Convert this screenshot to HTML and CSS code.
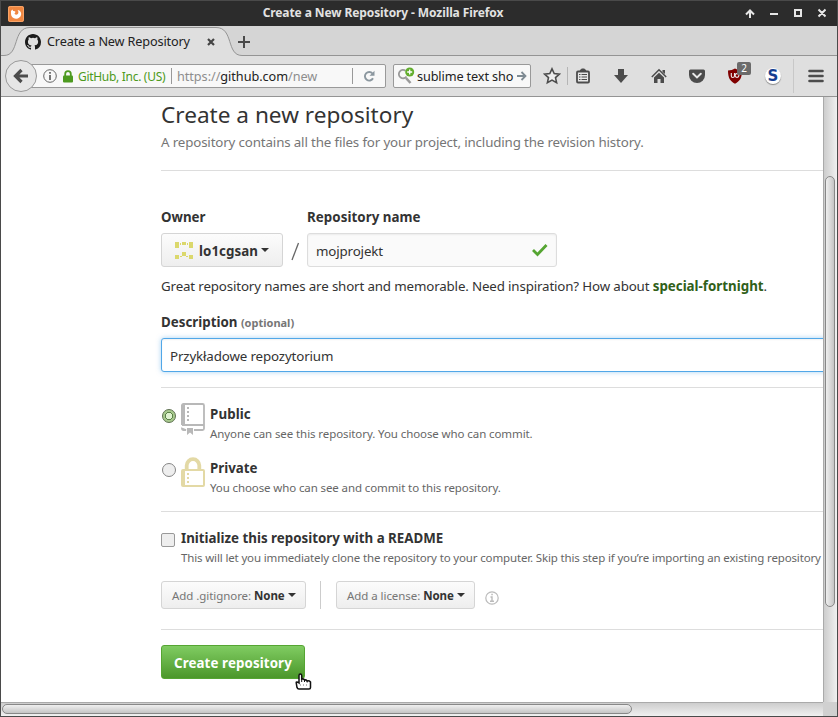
FILE: index.html
```html
<!DOCTYPE html>
<html lang="en">
<head>
<meta charset="utf-8">
<title>Create a New Repository</title>
<link rel="stylesheet" href="styles.css">
</head>
<body>
<div class="window">
  <header class="titlebar">
    <svg class="app-icon" width="16" height="16" viewBox="0 0 16 16"><rect width="16" height="16" rx="2" fill="#f08741"/><rect x=".5" y=".5" width="15" height="15" rx="2" fill="none" stroke="#f7a469"/><path d="M3 5l1.400-1.500.8 1.500c1 0 2 .3 2.300 1L6.500 7.500c.3 1.500 2.500 1.500 3.500.2.700-1 .5-2.400-.4-3.700 2.700.4 4 2.500 3.500 4.800-.5 2.500-2.700 4-5.100 3.900C5 12.500 3 10.500 3 8z" fill="#fff"/></svg>
    <div class="window-title">Create a New Repository - Mozilla Firefox</div>
    <svg class="window-controls" width="84" height="16" viewBox="0 0 84 16" fill="none" stroke="#e6e6e6" stroke-width="2"><path d="M8 12V5M4 8.500l4-4 4 4M28 8h8M53 4h6v6h-6zM76.500 3.500l7 7m0-7l-7 7"/></svg>
  </header>

  <div class="tabstrip">
    <svg class="tab-shape" width="838" height="31" viewBox="0 0 838 31"><path d="M0 29.500h4C20 29.500 12 1.500 30 1.500h186c18 0 10 28 26 28h596V31H0z" fill="#dfdfdf"/><path d="M0 29.500h4C20 29.500 12 1.500 30 1.500h186c18 0 10 28 26 28h596" fill="none" stroke="#949494"/></svg>
    <div class="tab">
      <svg width="16" height="16" viewBox="0 0 16 16"><path fill="#1b1b1b" fill-rule="evenodd" d="M8 0C3.580 0 0 3.580 0 8c0 3.540 2.290 6.530 5.470 7.590.4.070.55-.17.55-.38 0-.19-.01-.82-.01-1.490-2.010.37-2.530-.49-2.690-.94-.09-.23-.48-.94-.82-1.130-.28-.15-.68-.52-.01-.53.63-.01 1.080.58 1.230.82.72 1.210 1.870.87 2.330.66.07-.52.28-.87.51-1.070-1.780-.2-3.640-.89-3.640-3.950 0-.87.31-1.590.82-2.150-.08-.2-.36-1.020.08-2.120 0 0 .67-.21 2.200.82a7.600 7.600 0 014 0c1.530-1.040 2.200-.82 2.200-.82.44 1.100.16 1.920.08 2.120.51.56.82 1.270.82 2.150 0 3.070-1.870 3.750-3.650 3.950.29.25.54.73.54 1.480 0 1.070-.01 1.930-.01 2.200 0 .21.15.46.55.38A8.010 8.010 0 0016 8c0-4.420-3.580-8-8-8z"/></svg>
      <span class="tab-label">Create a New Repository</span>
      <svg class="tab-close" width="8" height="8" viewBox="0 0 8 8"><path d="M1 1l6 6m0-6L1 7" stroke="#444" stroke-width="2.200"/></svg>
      <svg width="12" height="12" viewBox="0 0 12 12"><path d="M6 0v12M0 6h12" stroke="#4a4a4a" stroke-width="2"/></svg>
    </div>
  </div>

  <nav class="toolbar">
    <div class="back"><svg width="16" height="16" viewBox="0 0 16 16"><path d="M8.500 2L2.500 8l6 6M3 8h12" fill="none" stroke="#4c4c4c" stroke-width="3.200"/></svg></div>
    <div class="urlbar">
      <svg class="info" width="14" height="14" viewBox="0 0 14 14"><circle cx="7" cy="7" r="6.300" fill="none" stroke="#666"/><path d="M7 6v5M7 3v1.700" stroke="#555" stroke-width="1.600"/></svg>
      <svg class="lock" width="10" height="13" viewBox="0 0 10 13"><path d="M2.200 6V4a2.800 2.800 0 015.600 0v2" fill="none" stroke="#4d9a20" stroke-width="1.800"/><rect y="5.500" width="10" height="7" rx="1" fill="#4d9a20"/></svg>
      <span class="identity">GitHub, Inc. (US)</span>
      <span class="divider"></span>
      <span class="url">https://<b>github.com</b>/new</span>
      <span class="reload"><svg width="12" height="12" viewBox="0 0 12 12"><path d="M9.500 3.500A4.300 4.300 0 1010 8.300" fill="none" stroke="#8b979f" stroke-width="1.900"/><path d="M11.500.8v5h-5z" fill="#8b979f"/></svg></span>
    </div>
    <div class="search">
      <svg width="18" height="18" viewBox="0 0 18 18"><path d="M8.500 3.700A4.200 4.200 0 109.500 9.500" fill="none" stroke="#9a9a9a" stroke-width="1.800"/><path d="M9 11l4.500 5" stroke="#9a9a9a" stroke-width="2.600"/><circle cx="12.700" cy="5" r="4.500" fill="#62ad2d"/><path d="M12.700 2.500v5M10.200 5h5" stroke="#fff" stroke-width="1.300"/></svg>
      <span class="query">sublime text sho</span>
      <svg width="10" height="10" viewBox="0 0 10 10"><path d="M0 5h8M4.500 1l4 4-4 4" fill="none" stroke="#7f8b93" stroke-width="1.800"/></svg>
    </div>
    <div class="tools">
      <span class="tool star"><svg width="18" height="18" viewBox="0 0 18 18"><path d="M9 1.800l2.200 4.700 5.200.6-3.900 3.500 1.100 5.100L9 13.100l-4.600 2.600 1.100-5.100L1.600 7.100l5.200-.6z" fill="#eee" stroke="#4c4c4c" stroke-width="1.600"/></svg></span>
      <span class="tool ruled"><svg width="16" height="16" viewBox="0 0 16 16" fill="none" stroke="#4c4c4c"><rect x="2" y="3.500" width="12" height="11" rx="1" stroke-width="1.800" fill="#e8e8e8"/><path d="M5 3L6.500 1h3L11 3z" fill="#4c4c4c"/><path d="M4 6.500h1.500M6.500 6.500H12M4 9h1.500M6.500 9H12M4 11.500h1.500M6.500 11.500H12" stroke-width="1.200"/></svg></span>
      <span class="tool"><svg width="16" height="16" viewBox="0 0 16 16"><path d="M5 1h6v6h4l-7 8-7-8h4z" fill="#4c4c4c"/></svg></span>
      <span class="tool"><svg width="16" height="16" viewBox="0 0 16 16"><path d="M.8 9L8 1.800 15.200 9" fill="none" stroke="#4c4c4c" stroke-width="1.500"/><path d="M11.500 2H14v4l-2.500-2zM3 9.500l5-4.700 5 4.700V15H9.500v-4h-3v4H3z" fill="#4c4c4c"/></svg></span>
      <span class="tool"><svg width="16" height="16" viewBox="0 0 16 16"><path d="M1.500 1.500h13q1.500 0 1.500 1.500v4a8 8 0 01-16 0V3q0-1.500 1.500-1.500z" fill="#4c4c4c"/><path d="M4.200 5.800L8 9.400l3.800-3.600" fill="none" stroke="#e8e8e8" stroke-width="2" stroke-linecap="round"/></svg></span>
      <span class="tool"><svg width="16" height="16" viewBox="0 0 16 16"><path d="M8 .5q3 2 7 2C15 10 13 13 8 15.800 3 13 1 10 1 2.500q4 0 7-2z" fill="#800000"/><path d="M4.300 5v3q0 1.500 1.500 1.500T7.500 8V5" fill="none" stroke="#eee" stroke-width="1.100"/><circle cx="10" cy="7.500" r="1.900" fill="none" stroke="#eee" stroke-width="1.100"/></svg><span class="badge">2</span></span>
      <span class="tool"><span class="s-icon">S</span></span>
      <span class="menu"><svg width="16" height="14" viewBox="0 0 16 14"><path d="M1.500 2h13M1.500 7h13M1.500 12h13" stroke="#4c4c4c" stroke-width="2.600" stroke-linecap="round"/></svg></span>
    </div>
  </nav>

  <div class="viewport">
    <main class="page">
      <h1>Create a new repository</h1>
      <p class="lede">A repository contains all the files for your project, including the revision history.</p>
      <hr>
      <div class="fields">
        <div class="field owner">
          <span class="label">Owner</span>
          <div class="button owner-button">
            <svg width="18" height="18" viewBox="0 0 18 18" fill="#dbd86c"><path d="M0 1h4v6H0zM14 1h4v6h-4zM7 1h4v3H7zM5 2h1v2H5zM12 2h1v2h-1zM7 11h4v4H7zM0 14h4v4H0zM14 14h4v4h-4zM5 15h2v1H5zM11 15h2v1h-2z"/></svg>
            <b>lo1cgsan</b><i class="caret"></i>
          </div>
        </div>
        <svg class="slash" width="24" height="34" viewBox="0 0 24 34"><path d="M15.500 10L9 27" stroke="#666" stroke-width="1.300"/></svg>
        <div class="field">
          <span class="label repo-label">Repository name</span>
          <div class="input name-input"><span>mojprojekt</span><svg width="16" height="14" viewBox="0 0 16 14"><path d="M1 7l4.500 4.500L14.500 2" fill="none" stroke="#55a532" stroke-width="2.800"/></svg></div>
        </div>
      </div>
      <p class="hint">Great repository names are short and memorable. Need inspiration? How about <b>special-fortnight</b>.</p>
      <div class="label desc-label"><span class="desc-word">Description</span> <small>(optional)</small></div>
      <div class="input desc-input">Przykładowe repozytorium</div>
      <hr class="after-desc">
      <div class="choice">
        <span class="radio checked"></span>
        <svg width="24" height="34" viewBox="0 0 24 34"><path d="M1 2.500Q1 1 2.500 1h19Q23 1 23 2.500v23q0 1.500-1.500 1.500H13M5 27H2.500Q1 27 1 25.500zM1 22h22" fill="none" stroke="#b8b8b8" stroke-width="1.800"/><path d="M0 2h4v20H0zM6 25h6v7l-3-2.500L6 32zM6 4h2v2H6zM6 8h2v2H6zM6 12h2v2H6zM6 16h2v2H6z" fill="#b8b8b8"/></svg>
        <div class="choice-text"><b class="public-name">Public</b><p class="public-note">Anyone can see this repository. You choose who can commit.</p></div>
      </div>
      <div class="choice">
        <span class="radio"></span>
        <svg width="24" height="34" viewBox="0 0 24 34"><path d="M5.700 13V8.500a6.300 6.300 0 0112.600 0V13" fill="none" stroke="#e3d9a5" stroke-width="3.800"/><rect x="1" y="13" width="22" height="16" rx="1" fill="none" stroke="#e3d9a5" stroke-width="2"/><path d="M1 13h3v16H1zM6 16h2v2H6zM6 20h2v2H6zM6 24h2v2H6z" fill="#e3d9a5"/></svg>
        <div class="choice-text"><b class="private-name">Private</b><p class="private-note">You choose who can see and commit to this repository.</p></div>
      </div>
      <hr class="after-choice">
      <div class="readme">
        <span class="checkbox"></span>
        <div class="choice-text"><b class="readme-name">Initialize this repository with a README</b><p class="readme-note">This will let you immediately clone the repository to your computer. Skip this step if you’re importing an existing repository</p></div>
      </div>
      <div class="options">
        <div class="button small git"><span>Add .gitignore: <b>None</b></span><i class="caret"></i></div>
        <span class="rule"></span>
        <div class="button small lic"><span>Add a license: <b>None</b></span><i class="caret"></i></div>
        <svg class="license-info" width="14" height="14" viewBox="0 0 14 14"><circle cx="7" cy="7" r="6.200" fill="none" stroke="#bbb" stroke-width="1.200"/><path d="M5.500 6H7v4M5 10.300h4M6.300 3.500h1.500" fill="none" stroke="#bbb" stroke-width="1.400"/></svg>
      </div>
      <hr class="after-options">
      <div class="create"><span>Create repository</span>
        <svg class="cursor" width="18" height="18" viewBox="0 0 18 18"><path d="M4 10V2.500q0-1.500 1.300-1.500t1.400 1.500V6q2.300-.5 2.800 1 2-.5 2.600 1 2-.6 3.400 1v5.500q0 1.500-1.500 1.500H4q-1.500 0-2-1.500L1.200 9.700Q1.200 8 4 10z" fill="#fff" stroke="#111" stroke-width="1.500"/><path d="M6.700 6v3M9.500 7v2M12.200 8v1.500" stroke="#111"/><path d="M5 12h8" stroke="#777" stroke-dasharray="1 2"/></svg>
      </div>
    </main>
    <div class="vscroll"><span class="vthumb"></span></div>
    <div class="hscroll"><span class="hthumb"></span></div>
    <div class="corner"></div>
  </div>
</div>
</body>
</html>
```
FILE: styles.css
```css
* { box-sizing: border-box; }
body { margin: 0; font: 13.33px "Noto Sans", sans-serif; color: #333; overflow: hidden; }
p, h1, hr { margin: 0; }
svg { display: block; flex: none; }
.window { width: 838px; height: 717px; border: 1px solid #4a4a4a; background: #dcdcdc; overflow: hidden; white-space: nowrap; }
.titlebar { height: 25px; background: #2c2c2c; display: grid; grid-template-columns: 100px 1fr 100px; align-items: center; }
.app-icon { margin-left: 7px; }
.window-title { color: #e2e2e2; font: bold 12px/23px "Noto Sans", sans-serif; letter-spacing: -.1px; height: 25px; text-align: center; padding-right: 72px; }
.window-controls { margin-left: 5px; }

.tabstrip { height: 31px; background: #d5d5d5; position: relative; }
.tab-shape { position: absolute; left: -1px; top: 0; }
.tab { position: relative; display: flex; align-items: center; height: 31px; padding-left: 24px; }
.tab-label { width: 160px; margin: 0 0 1px 6px; color: #222; font-size: 12.7px; letter-spacing: -.15px; }
.tab-close { margin-right: 23px; }

.toolbar { height: 40px; display: flex; align-items: center; padding-bottom: 1px; border-bottom: 1px solid #949494; background: #dfdfdf; }
.back { position: relative; z-index: 1; width: 32px; height: 32px; margin-left: 4px; border: 1px solid #999; border-radius: 50%; background: #e6e6e6; display: grid; place-items: center; }
.urlbar { display: flex; align-items: center; width: 356px; height: 24px; margin-left: -7px; padding-left: 12px; border: 1px solid #999; border-radius: 2px; background: #f8f8f8; }
.lock { margin-left: 6px; }
.identity { width: 88px; margin-left: 5px; color: #4d9a20; font-size: 12px; letter-spacing: -.3px; }
.divider { width: 1px; height: 16px; margin: 0 5px; background: #999; }
.url { color: #8e8e8e; width: 175px; font-size: 12.7px; letter-spacing: -.05px; }
.url b { font-weight: normal; color: #222; }
.reload { height: 16px; border-left: 1px solid #999; padding: 2px 0 0 10px; }
.search { display: flex; align-items: center; width: 138px; height: 24px; margin-left: 7px; padding: 0 3px; border: 1px solid #999; border-radius: 2px; background: #f8f8f8; }
.query { flex: 1; padding-left: 2px; color: #222; font-size: 12.7px; letter-spacing: -.12px; }
.tools { display: flex; align-items: center; margin-left: 6px; }
.tool { position: relative; width: 38px; height: 18px; display: grid; place-items: center; }
.star { width: 30px; }
.ruled { background: linear-gradient(#b5b5b5, #b5b5b5) 0 0 / 1px 18px no-repeat; width: 35px; padding-right: 3px; }
.badge { position: absolute; left: 21px; top: -5px; width: 14px; height: 13px; border-radius: 2px; background: #6b6b6b; color: #fff; font-size: 10px; line-height: 12px; text-align: center; }
.s-icon { width: 16px; height: 16px; border-radius: 50%; background: #fff; box-shadow: 0 1px 1px #888; color: #153f91; font: bold 15px/16px "DejaVu Sans", sans-serif; text-align: center; }
.menu { width: 44px; height: 34px; margin-left: 1px; padding-left: 14px; border-left: 1px solid #c8c8c8; display: flex; align-items: center; }

.viewport { display: grid; grid-template-columns: 822px 14px; grid-template-rows: 605px 14px; }
.page { background: #fff; padding-left: 160px; overflow: hidden; height: 605px; }
h1 { height: 36px; font-weight: normal; font-size: 22.6px; line-height: 36px; }
.lede { color: #767676; letter-spacing: -.145px; line-height: 18px; height: 18px; }
hr { border: 0; height: 1px; margin-top: 19px; background: #ddd; }
.fields { display: flex; align-items: flex-end; margin-top: 36px; }
.label { display: block; font-weight: bold; height: 20px; line-height: 20px; margin-bottom: 6px; }
.repo-label { letter-spacing: .05px; }
.button { display: flex; align-items: center; border: 1px solid #d5d5d5; border-radius: 3px; background: linear-gradient(#fcfcfc, #eee); }
.owner-button { width: 122px; height: 34px; padding-left: 13px; }
.owner-button b { margin-left: 6px; line-height: 32px; padding-top: 2px; letter-spacing: .05px; }
.caret { width: 0; height: 0; border: 4px solid transparent; border-top-color: #333; border-bottom: 0; margin-left: 3px; }
.input { height: 34px; line-height: 34px; border: 1px solid #ddd; border-radius: 3px; padding-left: 8px; background: #fafafa; box-shadow: inset 0 1px 2px rgba(0,0,0,.06); letter-spacing: -.14px; }
.name-input { width: 250px; display: flex; align-items: center; justify-content: space-between; padding-right: 8px; }
.name-input span { padding-top: 1px; }
.hint { height: 20px; line-height: 20px; margin-top: 9px; letter-spacing: -.15px; }
.hint b { color: #306019; letter-spacing: 0; }
.desc-label { margin: 16px 0 6px; }
.label small { font-size: 11px; color: #767676; }
.desc-input { width: 680px; background: #fff; border-color: #51a7e8; box-shadow: inset 0 1px 2px rgba(0,0,0,.06), 0 0 5px rgba(81,167,232,.5); }
.after-desc { margin-top: 15px; }
.choice { display: flex; height: 54px; }
.after-desc + .choice { margin-top: 15px; }
.radio { flex: none; width: 14px; height: 14px; margin: 6px 5px 0 1px; border: 1px solid #858585; border-radius: 50%; background: #eee; }
.checked { background: radial-gradient(circle, #dff2d0 0 3px, #5b8148 3px 4px, #a7c98d 4px); border-color: #5d704f; }
.choice-text { margin-left: 5px; }
.choice .choice-text { padding-top: 1px; }
.choice-text b { display: block; height: 20px; line-height: 20px; }
.choice-text p { font-size: 11.5px; line-height: 20px; color: #666; }
.public-name { letter-spacing: .1px; }
.choice-text .public-note { letter-spacing: -.09px; }
.choice-text .private-note { letter-spacing: -.11px; }
.choice-text .readme-note { letter-spacing: -.15px; }
.after-choice { margin-top: 0; }
.readme { display: flex; margin-top: 16px; height: 40px; }
.readme .choice-text { margin-left: 6px; }
.checkbox { flex: none; width: 14px; height: 14px; margin-top: 5px; border: 1px solid #999; border-radius: 2px; background: #eee; }
.options { display: flex; align-items: center; margin-top: 13px; height: 28px; }
.small { height: 28px; padding-left: 10px; font-size: 11.5px; color: #767676; letter-spacing: -.06px; }
.small b { color: #333; }
.git { width: 145px; }
.lic { width: 139px; }
.rule { width: 1px; height: 28px; margin: 0 15px 0 14px; background: #ccc; }
.license-info { margin: 6px 0 0 10px; }
.after-options { margin-top: 20px; }
.create { position: relative; width: 144px; height: 34px; margin-top: 15px; border: 1px solid #55a532; border-radius: 3px; background: linear-gradient(#80cc62, #4b972a); color: #fff; font-weight: bold; letter-spacing: .1px; line-height: 34px; padding-left: 12px; }
.cursor { position: absolute; left: 133px; top: 27px; }
.vscroll { background: linear-gradient(90deg, #cdcdcd, #f0f0f0); border-left: 1px solid #aaa; padding: 79px 1px 0; }
.vthumb { display: block; width: 10px; height: 431px; border: 1px solid #888; border-radius: 5px; background: linear-gradient(90deg, #efefef, #c5c5c5); }
.hscroll { background: linear-gradient(#cdcdcd, #f0f0f0); border-top: 1px solid #aaa; padding: 1px 0 0 1px; }
.hthumb { display: block; width: 630px; height: 10px; border: 1px solid #888; border-radius: 5px; background: linear-gradient(#efefef, #c5c5c5); }
.corner { background: #d0d0d0; }
```
